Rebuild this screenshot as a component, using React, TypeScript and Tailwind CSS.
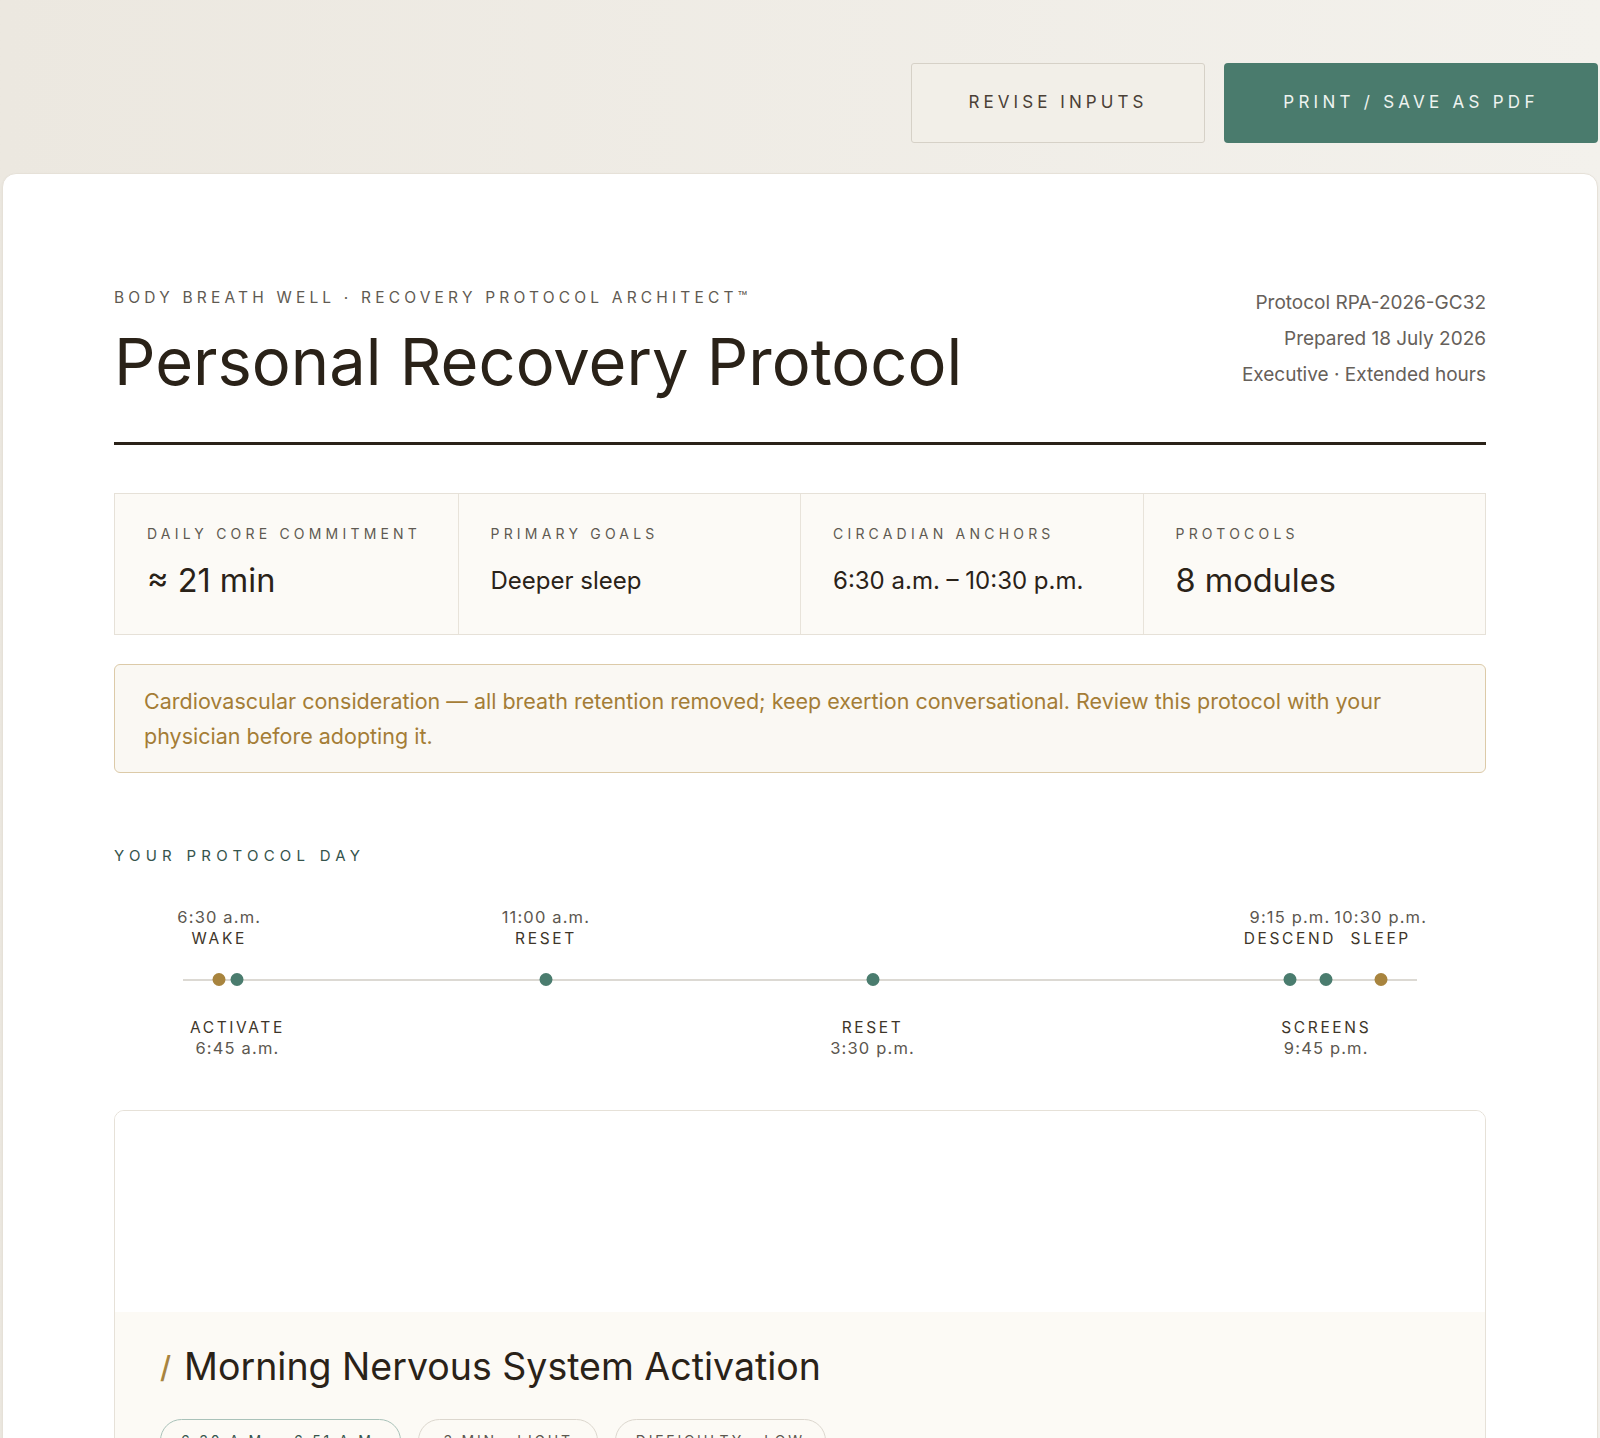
import React from "react";

const GREEN = "#4a7c6e";
const GOLD = "#a8843e";

type Ev = { t: number; time: string; label: string; above: boolean; gold?: boolean };

const events: Ev[] = [
  { t: 6.5, time: "6:30 a.m.", label: "WAKE", above: true, gold: true },
  { t: 6.75, time: "6:45 a.m.", label: "ACTIVATE", above: false },
  { t: 11, time: "11:00 a.m.", label: "RESET", above: true },
  { t: 15.5, time: "3:30 p.m.", label: "RESET", above: false },
  { t: 21.25, time: "9:15 p.m.", label: "DESCEND", above: true },
  { t: 21.75, time: "9:45 p.m.", label: "SCREENS", above: false },
  { t: 22.5, time: "10:30 p.m.", label: "SLEEP", above: true, gold: true },
];

const pct = (t: number) => ((t - 6) / 17) * 100;

function Stat({ label, value, big }: { label: string; value: string; big?: boolean }) {
  return (
    <div className="px-[32px] pt-[30px] pb-[33px] border-l border-[#e8e3da] first:border-l-0">
      <div className="text-[14px] leading-[20px] tracking-[0.3em] text-[#5f5a52] whitespace-nowrap">{label}</div>
      <div
        className={
          "mt-[17px] leading-[40px] text-[#2a2218] whitespace-nowrap " + (big ? "text-[32.5px]" : "text-[24px]")
        }
      >
        {value}
      </div>
    </div>
  );
}

export default function App() {
  return (
    <div
      className="h-[1438px] overflow-hidden bg-gradient-to-r from-[#ece8e0] to-[#f3f1ec] text-[#2a2218]"
      style={{ fontFamily: "Inter, 'Open Sans', sans-serif" }}
    >
      <div className="mx-[2px]">
        {/* toolbar */}
        <div className="flex justify-end gap-[19px] pt-[63px] pb-[30px]">
          <button className="h-[80px] w-[294px] rounded-[3px] border border-[#d6d1c7] bg-[#f2efe8] text-[17px] tracking-[0.24em] text-[#4a4036]">
            REVISE INPUTS
          </button>
          <button className="h-[80px] w-[374px] rounded-[4px] bg-[#4a7b6d] text-[17px] tracking-[0.25em] text-[#eef3f0]">
            PRINT / SAVE AS PDF
          </button>
        </div>

        {/* card */}
        <div className="rounded-t-[14px] border border-[#e6e1d8] bg-white px-[111px] pt-[111px] shadow-[0_1px_3px_rgba(0,0,0,0.04)]">
          {/* header */}
          <div className="flex items-start justify-between border-b-[3px] border-[#2a2218] pb-[44px]">
            <div>
              <div className="text-[15.5px] leading-[26px] tracking-[0.27em] text-[#5f5a52] whitespace-nowrap">
                BODY BREATH WELL · RECOVERY PROTOCOL ARCHITECT™
              </div>
              <h1 className="mt-[15px] text-[65px] leading-[72px] font-normal text-[#2a2218] whitespace-nowrap">
                Personal Recovery Protocol
              </h1>
            </div>
            <div className="text-right text-[19px] leading-[36px] text-[#66605a]">
              <div>Protocol RPA-2026-GC32</div>
              <div>Prepared 18 July 2026</div>
              <div>Executive · Extended hours</div>
            </div>
          </div>

          {/* stats */}
          <div className="mt-[48px] grid grid-cols-4 border border-[#e6e1d8] bg-[#fcfaf6]">
            <Stat label="DAILY CORE COMMITMENT" value="≈ 21 min" big />
            <Stat label="PRIMARY GOALS" value="Deeper sleep" />
            <Stat label="CIRCADIAN ANCHORS" value="6:30 a.m. – 10:30 p.m." />
            <Stat label="PROTOCOLS" value="8 modules" big />
          </div>

          {/* warning */}
          <div className="mt-[29px] rounded-[6px] border border-[#dccaa8] bg-[#faf8f3] pl-[29px] pr-[60px] pt-[19px] pb-[18px] text-[21.5px] leading-[35px] text-[#a47d36]">
            Cardiovascular consideration — all breath retention removed; keep exertion conversational. Review this
            protocol with your physician before adopting it.
          </div>

          {/* protocol day */}
          <div className="mt-[73px] text-[15px] leading-[20px] tracking-[0.35em] text-[#35544c]">YOUR PROTOCOL DAY</div>

          <div className="mx-[69px] mt-[41px] relative h-[154px]">
            <div className="absolute left-0 right-0 top-[72px] h-[2px] bg-[#dcd9d3]" />
            {events.map((e, i) => (
              <React.Fragment key={i}>
                <div
                  className="absolute top-[66px] h-[13px] w-[13px] -translate-x-1/2 rounded-full"
                  style={{ left: `${pct(e.t)}%`, backgroundColor: e.gold ? GOLD : GREEN }}
                />
                <div
                  className={
                    "absolute flex -translate-x-1/2 flex-col items-center whitespace-nowrap " +
                    (e.above ? "top-0" : "top-[110px]")
                  }
                  style={{ left: `${pct(e.t)}%` }}
                >
                  {e.above ? (
                    <>
                      <div className="text-[16.5px] leading-[21px] tracking-[0.07em] text-[#5c574f]">{e.time}</div>
                      <div className="text-[15.5px] leading-[21px] tracking-[0.17em] text-[#3d3529]">{e.label}</div>
                    </>
                  ) : (
                    <>
                      <div className="text-[15.5px] leading-[21px] tracking-[0.17em] text-[#3d3529]">{e.label}</div>
                      <div className="text-[16.5px] leading-[21px] tracking-[0.07em] text-[#5c574f]">{e.time}</div>
                    </>
                  )}
                </div>
              </React.Fragment>
            ))}
          </div>

          {/* module card */}
          <div className="mt-[49px] overflow-hidden rounded-[10px] border border-[#e6e1d8]">
            <div className="h-[201px] bg-white" />
            <div className="bg-[#fcfaf5] px-[45px] pt-[31px] pb-[40px]">
              <div className="flex items-center">
                <span className="mr-[13px] text-[30px] leading-[48px] font-medium text-[#a8843e]">/</span>
                <h2 className="text-[37.5px] leading-[48px] font-normal text-[#2a2218]">Morning Nervous System Activation</h2>
              </div>
              <div className="mt-[28px] flex gap-[17px]">
                <span className="rounded-full border border-[#a9c2b9] px-[20px] py-[10px] text-[14px] tracking-[0.2em] text-[#35544c] whitespace-nowrap">
                  6:30 A.M. – 6:51 A.M.
                </span>
                <span className="rounded-full border border-[#dcd7ce] px-[24px] py-[10px] text-[14px] tracking-[0.2em] text-[#5c574f] whitespace-nowrap">
                  3 MIN · LIGHT
                </span>
                <span className="rounded-full border border-[#dcd7ce] px-[20px] py-[10px] text-[14px] tracking-[0.2em] text-[#5c574f] whitespace-nowrap">
                  DIFFICULTY · LOW
                </span>
              </div>
            </div>
          </div>
          <div className="h-[80px]" />
        </div>
      </div>
    </div>
  );
}
